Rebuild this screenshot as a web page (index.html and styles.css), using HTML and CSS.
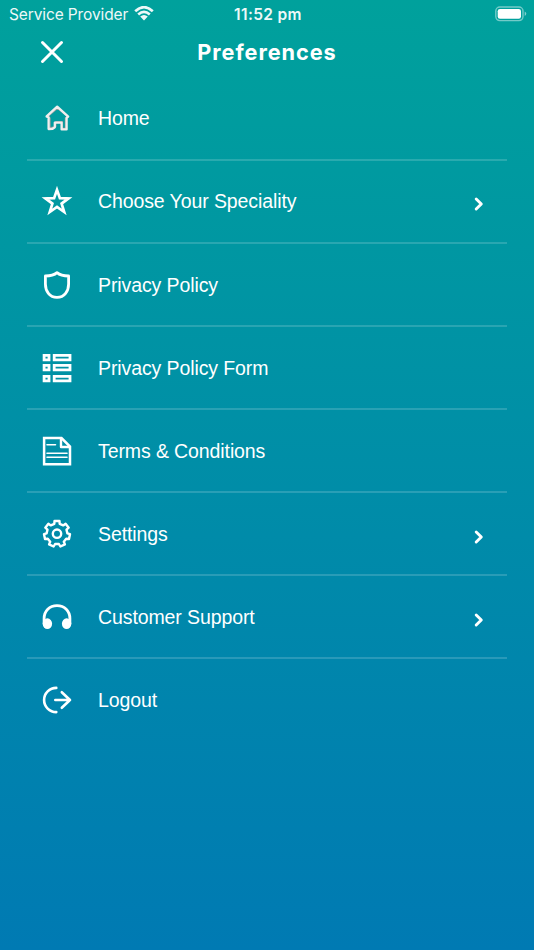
FILE: index.html
```html
<!DOCTYPE html>
<html lang="en">
<head>
<meta charset="utf-8">
<title>Preferences</title>
<link rel="stylesheet" href="styles.css">
</head>
<body>
<div class="status">
  <div class="carrier"><span>Service Provider</span>
    <svg class="wifi" viewBox="0 0 20 15"><path d="M1.2 5.2Q10-2.8 18.8 5.2M4.2 8.4Q10 3.4 15.8 8.4" fill="none" stroke="#fff" stroke-width="2.7"/><path d="M6.2 10.6Q10 7.4 13.8 10.6L10 14.5Z" fill="#fff"/></svg>
  </div>
  <div class="time">11:52 pm</div>
  <div class="power">
    <svg class="battery" viewBox="0 0 32 16"><rect x=".8" y="1" width="27.2" height="13.6" rx="4" fill="none" stroke="#fff" stroke-opacity=".45" stroke-width="1.4"/><rect x="2.7" y="3" width="23.3" height="9.7" rx="2.3" fill="#fff"/><path d="M29.7 5.5Q31.3 6.2 31.3 7.8T29.7 10Z" fill="#fff" fill-opacity=".5"/></svg>
  </div>
</div>
<header class="header">
  <svg class="close" viewBox="0 0 24 24"><path d="M2.5 2.5 21.5 21.5M21.5 2.5 2.5 21.5"/></svg>
  <h1 class="title">Preferences</h1>
</header>
<nav class="menu">
  <a class="row"><svg class="icon" viewBox="0 0 32 32"><path class="shade" d="M6.8 14.5 16.6 6.3 26.6 14.5 24.5 16V26.5H21.4V19.7H14.8V24.5L9 26V16Z"/><path class="house" d="M5.6 14.4 16.2 4.6 27.2 14.6 25.6 15.8V27.4H20.6V20.6H13.8V25.2L11.6 26.8 7.6 27V15.4Z"/></svg><span class="label">Home</span></a>
  <a class="row"><svg class="icon" viewBox="0 0 32 32"><path class="mitre star" d="M16 4.9 18.9 13.2 27.5 13.4 20.6 18.6 23.2 27 16 22 8.8 27 11.4 18.6 4.5 13.4 13.1 13.2Z"/></svg><span class="label">Choose Your Speciality</span><svg class="chevron" viewBox="0 0 10 16"><path d="M2.2 3 7.3 8 2.2 13"/></svg></a>
  <a class="row"><svg class="icon" viewBox="0 0 32 32"><path d="M16 3.6C13 6.2 9 7 4.4 7V15C4.4 22 8.5 28.4 16 28.4S27.6 22 27.6 15V7C23 7 19 6.2 16 3.6Z"/></svg><span class="label">Privacy Policy</span></a>
  <a class="row"><svg class="icon" viewBox="0 0 32 32"><path class="mitre" d="M3.1 3.3H8V7.9H3.1ZM13.2 3.3H29V7.9H13.2ZM3.1 13.3H8V17.9H3.1ZM13.2 13.3H29V17.9H13.2ZM3.1 24.3H8V28.9H3.1ZM13.2 24.3H29V28.9H13.2Z"/></svg><span class="label">Privacy Policy Form</span></a>
  <a class="row"><svg class="icon" viewBox="0 0 32 32"><path class="mitre page" d="M3.1 3H20.5L29 11.6V29.2H3.1Z"/><path class="fold" d="M20 3.5V12H28.5"/><path class="lines" d="M6 9.7H14.5M6 18.3H26M6 22.3H26"/></svg><span class="label">Terms &amp; Conditions</span></a>
  <a class="row"><svg class="icon" viewBox="0 0 32 32"><path class="gear" transform="translate(16 15.8)" d="M-2.5-12.8H2.5L2.7-10 6.2-8.4 8.6-10.1 11.7-6.1 9.5-4.2 10.4-.4 13 .4 12 5.2 9.2 4.9 6.8 7.9 7.9 10.6 3.4 12.7 1.9 10.2H-1.9L-3.4 12.7-7.9 10.6-6.8 7.9-9.2 4.9-12 5.2-13 .4-10.4-.4-9.5-4.2-11.7-6.1-8.6-10.1-6.2-8.4-2.7-10Z"/><circle class="gear" cx="16" cy="15.7" r="4.2"/></svg><span class="label">Settings</span><svg class="chevron" viewBox="0 0 10 16"><path d="M2.2 3 7.3 8 2.2 13"/></svg></a>
  <a class="row"><svg class="icon" viewBox="0 0 32 32"><path d="M3.1 23V17.5C3.1 9.8 8.5 4.6 16 4.6S28.9 9.8 28.9 17.5V23"/><ellipse class="solid" cx="6.4" cy="22.7" rx="4.7" ry="5.4"/><ellipse class="solid" cx="25.6" cy="22.7" rx="4.7" ry="5.4"/></svg><span class="label">Customer Support</span><svg class="chevron" viewBox="0 0 10 16"><path d="M2.2 3 7.3 8 2.2 13"/></svg></a>
  <a class="row"><svg class="icon" viewBox="0 0 32 32"><path class="exit" d="M15.3 3.9C8.5 3.9 3.1 9.2 3.1 16S8.5 28.1 15.3 28.1M14.3 16H29M20.8 8.2 29 16 20.8 23.8"/></svg><span class="label">Logout</span></a>
</nav>
</body>
</html>
```
FILE: styles.css
```css
* { box-sizing: border-box; }
html { height: 100%; }
body {
  margin: 0;
  height: 950px;
  overflow: hidden;
  color: #fff;
  font-family: "Liberation Sans", Arial, sans-serif;
  background: linear-gradient(#00a19c, #007ab3);
}
.status {
  height: 28px;
  padding: 0 7px 0 9px;
  display: grid;
  grid-template-columns: 1fr auto 1fr;
  align-items: center;
  font-family: Inter, sans-serif;
  font-size: 15.5px;
  line-height: 28px;
}
.carrier { display: flex; align-items: center; gap: 6px; white-space: nowrap; letter-spacing: -.12px; opacity: .93; }
.wifi { width: 20px; height: 15px; margin-top: -2px; }
.time { font-weight: 600; letter-spacing: .35px; opacity: .93; }
.carrier span, .time { padding-top: 1px; }
.power { display: flex; justify-content: flex-end; }
.battery { width: 32px; height: 16px; margin-top: -2px; }
.header {
  height: 48px;
  padding: 0 40px;
  display: grid;
  grid-template-columns: 24px 1fr 24px;
  align-items: center;
}
.close { width: 24px; height: 24px; fill: none; stroke: #fff; stroke-width: 3; stroke-linecap: round; }
.title { margin: -1px 0 0; text-align: center; font-family: Inter, sans-serif; font-weight: 650; font-size: 21.7px; letter-spacing: .95px; line-height: 48px; }
.menu { margin: 0 27px; padding-top: 1.8px; }
.row {
  height: 83.1px;
  padding: 0 23px 0 14px;
  display: flex;
  align-items: center;
  border-bottom: 2px solid rgba(255, 255, 255, .16);
}
.row:last-child { height: 81px; border-bottom: 0; }
.icon { width: 32px; height: 32px; margin-right: 25px; fill: none; stroke: #fff; stroke-width: 2.8; stroke-linejoin: round; stroke-linecap: round; }
.mitre { stroke-linejoin: miter; stroke-linecap: butt; }
.star { stroke-width: 2.7; }
.page { stroke-width: 2.5; }
.shade { stroke: #8f9c9c; stroke-width: 1.4; }
.house { stroke: #f1eeee; stroke-width: 2.3; }
.fold { stroke-width: 2.4; }
.lines { stroke-width: 1.6; }
.gear { stroke-width: 2.4; }
.solid { fill: #fff; stroke: none; }
.exit { stroke-width: 2.6; }
.label { font-size: 19.5px; letter-spacing: -.1px; line-height: 24px; white-space: nowrap; }
.chevron { width: 10px; height: 16px; margin: 6px 0 0 auto; fill: none; stroke: #fff; stroke-width: 2.9; stroke-linecap: round; stroke-linejoin: round; }
```
